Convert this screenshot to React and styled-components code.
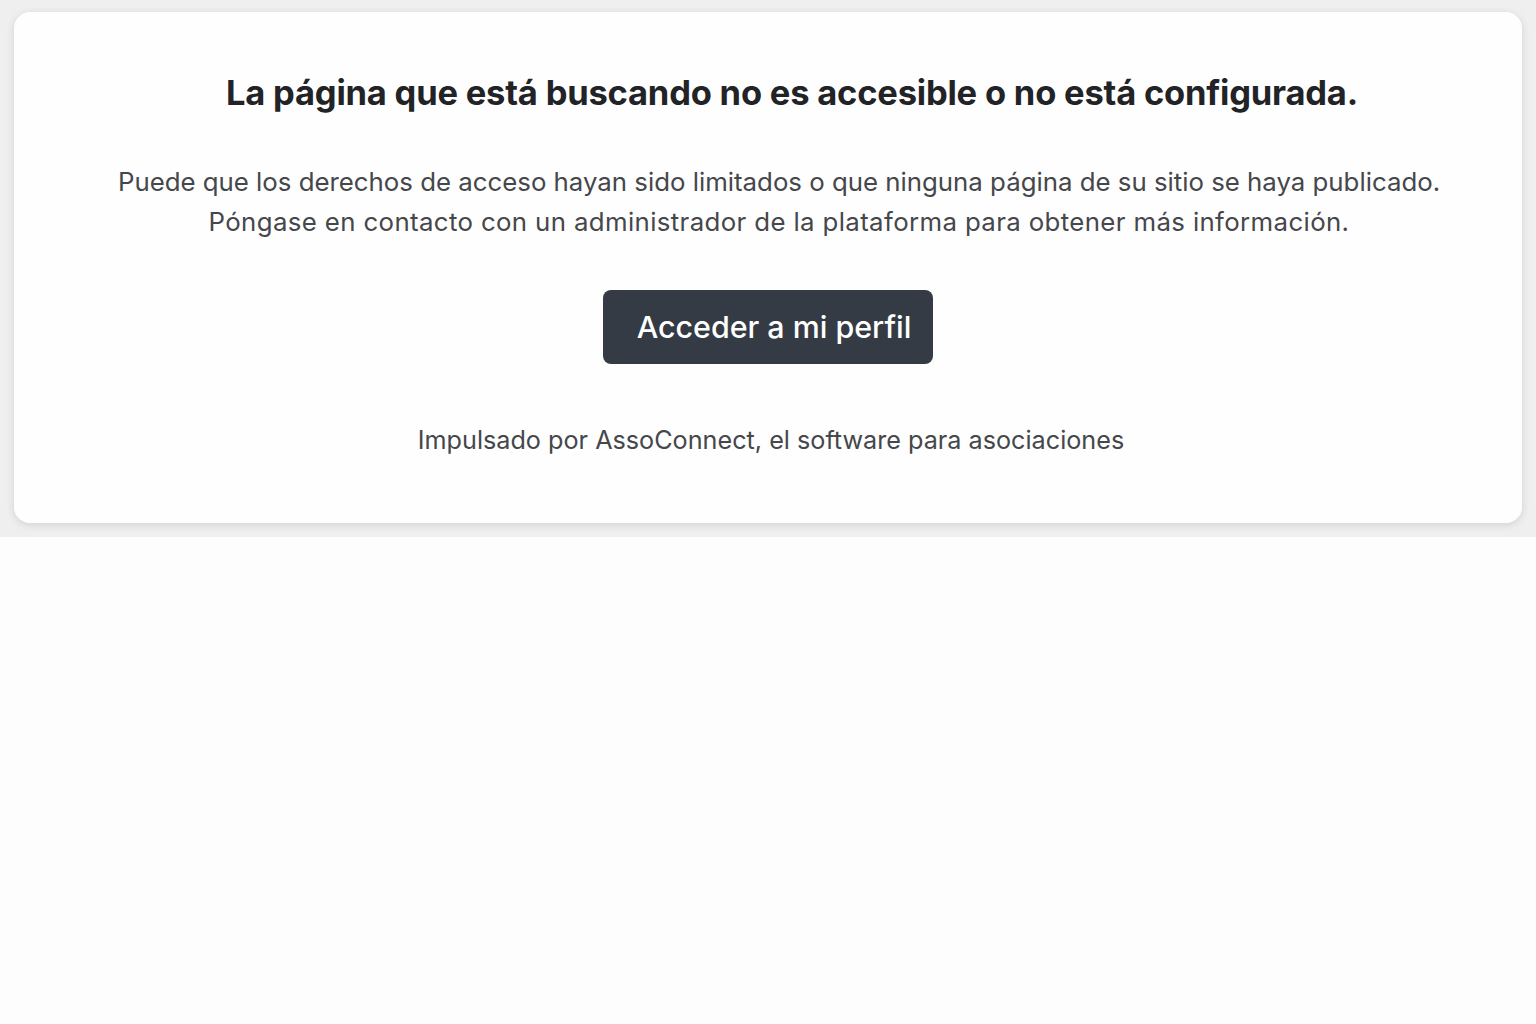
import styled, { createGlobalStyle } from "styled-components"

const Global = createGlobalStyle`
  html, body {
    margin: 0;
    background: #fdfdfd;
    font-family: Inter, "Open Sans", sans-serif;
  }
`

const Band = styled.div`
  background: #efefef;
  padding: 12px 14px 14px;
`

const Card = styled.div`
  background: #fefefe;
  border-radius: 16px;
  box-shadow: 0 2px 8px rgba(0, 0, 0, 0.12);
  height: 511px;
  box-sizing: border-box;
  padding-top: 59px;
  display: flex;
  flex-direction: column;
  align-items: center;
  text-align: center;
`

const Title = styled.h1`
  margin: 0 0 0 48px;
  font-size: 34.5px;
  font-weight: 700;
  color: #222326;
  letter-spacing: -0.2px;
  line-height: 44px;
`

const Desc = styled.p`
  margin: 47px 0 0 22px;
  font-size: 25.8px;
  line-height: 40px;
  color: #45474b;
`

const Line = styled.span`
  display: block;
  letter-spacing: ${(p) => p.$spacing || 0}px;
`

const Button = styled.button`
  margin-top: 48px;
  width: 330px;
  height: 74px;
  padding: 0 0 0 12px;
  border: none;
  border-radius: 8px;
  background: #353b44;
  color: #fff;
  font-family: inherit;
  font-size: 30.4px;
  font-weight: 500;
  cursor: pointer;
`

const Powered = styled.p`
  margin: 61px 0 0 6px;
  font-size: 25.2px;
  color: #45474b;
`

const App = () => {
  return (
    <>
      <Global />
      <Band>
        <Card>
          <Title>La página que está buscando no es accesible o no está configurada.</Title>
          <Desc>
            <Line>
              Puede que los derechos de acceso hayan sido limitados o que ninguna página de su sitio se haya publicado.
            </Line>
            <Line $spacing={0.37}>
              Póngase en contacto con un administrador de la plataforma para obtener más información.
            </Line>
          </Desc>
          <Button>Acceder a mi perfil</Button>
          <Powered>Impulsado por AssoConnect, el software para asociaciones</Powered>
        </Card>
      </Band>
    </>
  )
}

export default App
